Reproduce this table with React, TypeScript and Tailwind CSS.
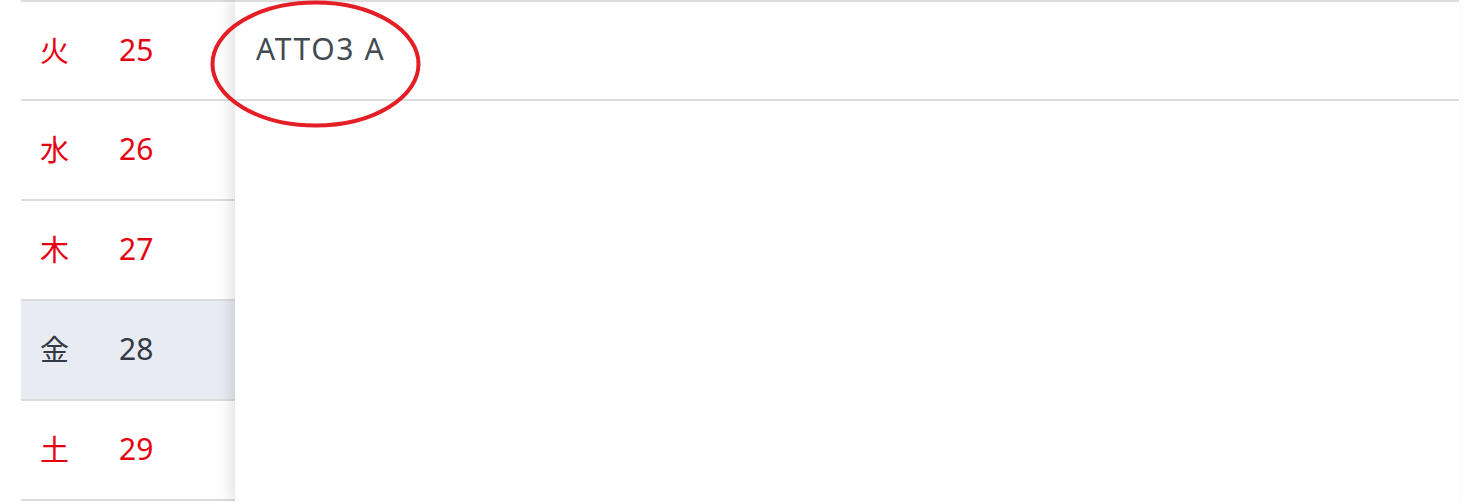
import React from "react";

const rows = [
  { d: "火", n: "25", red: true },
  { d: "水", n: "26", red: true },
  { d: "木", n: "27", red: true },
  { d: "金", n: "28", red: false, sel: true },
  { d: "土", n: "29", red: true },
];

export default function App() {
  return (
    <div
      className="relative w-[1472px] h-[502px] overflow-hidden bg-white"
      style={{ fontFamily: '"Noto Sans", "Noto Sans CJK JP", sans-serif' }}
    >
      <div className="flex h-full">
        <div className="ml-[21px] w-[214px] shrink-0 border-t-2 border-[#dcdcdc]">
          {rows.map((r, i) => (
            <div
              key={r.n}
              className={`flex ${i === 0 ? "h-[99px]" : "h-[100px]"} items-center border-b-2 border-[#dcdcdc] text-[30px] leading-none ${
                r.sel ? "bg-[#e8ebf2] text-[#333a44]" : "text-[#e60012]"
              }`}
            >
              <span className="ml-[19px] w-[79px] mb-[3px] text-[29px]" style={{ fontFamily: '"Noto Sans CJK JP", sans-serif' }}>{r.d}</span>
              <span className="mb-[2px]">{r.n}</span>
            </div>
          ))}
        </div>
        <div className="relative z-10 mr-[13px] flex-1 bg-white shadow-[-6px_0_12px_rgba(0,0,0,0.10)]">
          <div className="flex h-[101px] items-center border-t-2 border-b-2 border-[#dcdcdc] pl-[21px] text-[30px] leading-none tracking-[1.6px] text-[#444a52]">
            <span className="mb-[4px]">ATTO3 A</span>
          </div>
        </div>
      </div>
      <svg
        className="pointer-events-none absolute left-0 top-0 z-20"
        width="1472"
        height="502"
      >
        <ellipse
          cx="315.5"
          cy="64"
          rx="103"
          ry="61.5"
          fill="none"
          stroke="#e41e26"
          strokeWidth="4"
        />
      </svg>
    </div>
  );
}
